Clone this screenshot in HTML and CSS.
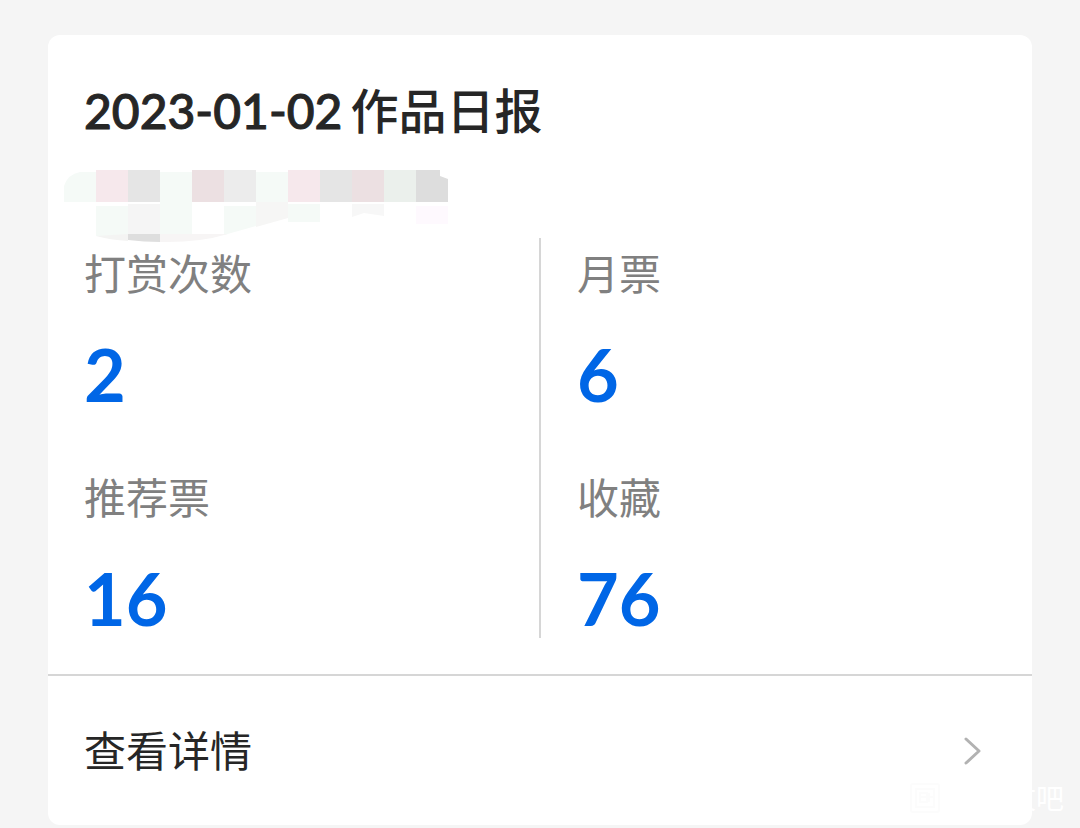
FILE: index.html
```
<!DOCTYPE html>
<html lang="zh-CN">
  <head>
    <meta charset="UTF-8" />
    <meta name="viewport" content="width=device-width, initial-scale=1.0" />
    <title>作品日报</title>
    <link rel="stylesheet" href="styles.css">
  </head>
  <body>
    <main class="card">
      <header class="card-header">
        <h1><span class="date">2023-01-02</span> <span>作品日报</span></h1>
      </header>

      <!-- work name, hidden by a mosaic -->
      <svg class="mosaic" width="384" height="74" viewBox="0 0 384 74" aria-hidden="true">
        <path fill="#f5faf7" d="M0 32V16Q4 4 16 2H32V32Z" />
        <path fill="#f6e8ec" d="M32 0h32v32H32z" />
        <path fill="#e5e5e5" d="M64 0h32v32H64z" />
        <path fill="#f5faf7" d="M96 2h32v62H96z" />
        <path fill="#ece0e2" d="M128 0h32v32h-32z" />
        <path fill="#ececec" d="M160 0h32v32h-32z" />
        <path fill="#f5faf7" d="M192 2h32v30h-32z" />
        <path fill="#f6e8ec" d="M224 0h32v32h-32z" />
        <path fill="#e5e5e5" d="M256 0h32v32h-32z" />
        <path fill="#ece0e2" d="M288 0h32v32h-32z" />
        <path fill="#ebf0ec" d="M320 0h32v32h-32z" />
        <path fill="#dddddd" d="M352 0h24v6l8 3v23h-32z" />
        <path fill="#f5faf7" d="M32 36h32v30H32z" />
        <path fill="#f5f5f5" d="M64 34h32v30H64z" />
        <path fill="#f5faf7" d="M160 36h32v20l-32 9z" />
        <path fill="#f6f6f5" d="M192 32h32v16l-32 9z" />
        <path fill="#f5faf7" d="M224 34h32v18h-32z" />
        <path fill="#f7f7f7" d="M288 34h32v12l-20-3-12 4z" />
        <path fill="#fef9fe" d="M352 36h32v18h-32z" />
        <path fill="#f4f4f3" d="M32 66l32-2v7q-18-1-32-5z" />
        <path fill="#dedede" d="M64 64h32v8q-16 0-32-2z" />
        <path fill="#f7f5f5" d="M96 64h68q-30 9-68 8z" />
      </svg>

      <section class="stats">
        <dl class="stats-column">
          <div class="stat">
            <dt>打赏次数</dt>
            <dd>2</dd>
          </div>
          <div class="stat">
            <dt>推荐票</dt>
            <dd>16</dd>
          </div>
        </dl>
        <dl class="stats-column">
          <div class="stat">
            <dt>月票</dt>
            <dd>6</dd>
          </div>
          <div class="stat">
            <dt>收藏</dt>
            <dd>76</dd>
          </div>
        </dl>
      </section>

      <a class="details" href="#">
        <span>查看详情</span>
        <svg class="chevron" width="20" height="30" viewBox="0 0 20 30" aria-hidden="true">
          <path d="M4 3l13 12L4 27" />
        </svg>
      </a>
    </main>

    <div class="watermark">
      <svg width="30" height="30" viewBox="0 0 30 30" aria-hidden="true">
        <rect x="1" y="1" width="28" height="28" rx="2" />
        <path d="M6 6h18v18H6zM10 10h7v9h-7zM10 14h7M19 10v9M19 14h4" />
      </svg>
      <span>文吧</span>
    </div>
  </body>
</html>
```

FILE: styles.css
```
* {
  box-sizing: border-box;
}

body {
  margin: 0;
  padding: 35px 48px 3px;
  background-color: #f5f5f5;
  font-family: Lato, "Noto Sans CJK SC", sans-serif;
  color: #262626;
}

.card {
  background-color: #fff;
  border-radius: 12px;
}

.card-header {
  padding: 40px 36px 23px;
}

.card-header h1 {
  display: flex;
  gap: 8px;
  margin: 0;
  font-size: 48px;
  font-weight: 500;
  line-height: 72px;
}

.card-header .date {
  -webkit-text-stroke: 1px #262626;
}

.mosaic {
  display: block;
  margin-left: 16px;
}

.stats {
  display: grid;
  grid-template-columns: 1fr 1fr;
  margin-top: -6px; /* mosaic runs down into the first row */
  padding-bottom: 36px;
}

.stats-column {
  display: flex;
  flex-direction: column;
  gap: 52px;
  margin: 0;
  padding: 4px 36px 0;
}

.stats-column + .stats-column {
  margin-left: -1px;
  border-left: 2px solid #d6d6d6;
}

.stat dt {
  color: #808080;
  font-size: 42px;
  line-height: 64px;
}

.stat dd {
  margin: 28px 0 0;
  color: #0066e6;
  font-size: 72px;
  font-weight: 700;
  line-height: 80px;
}

.details {
  display: flex;
  align-items: center;
  justify-content: space-between;
  padding: 43px 50px 42px 36px;
  border-top: 2px solid #d6d6d6;
  border-radius: 0 0 12px 12px;
  color: #262626;
  font-size: 42px;
  line-height: 64px;
  text-decoration: none;
}

.chevron path {
  fill: none;
  stroke: #b2b2b2;
  stroke-width: 3;
  stroke-linecap: round;
  stroke-linejoin: round;
}

/* Floats over the bottom right corner of the page */
.watermark {
  position: absolute;
  right: 16px;
  bottom: 14px;
  display: flex;
  align-items: center;
  justify-content: space-between;
  width: 154px;
  color: #fff;
  font-size: 28px;
  line-height: 32px;
}

.watermark svg {
  fill: none;
  stroke: #fcfcfc;
  stroke-width: 2;
}
```
